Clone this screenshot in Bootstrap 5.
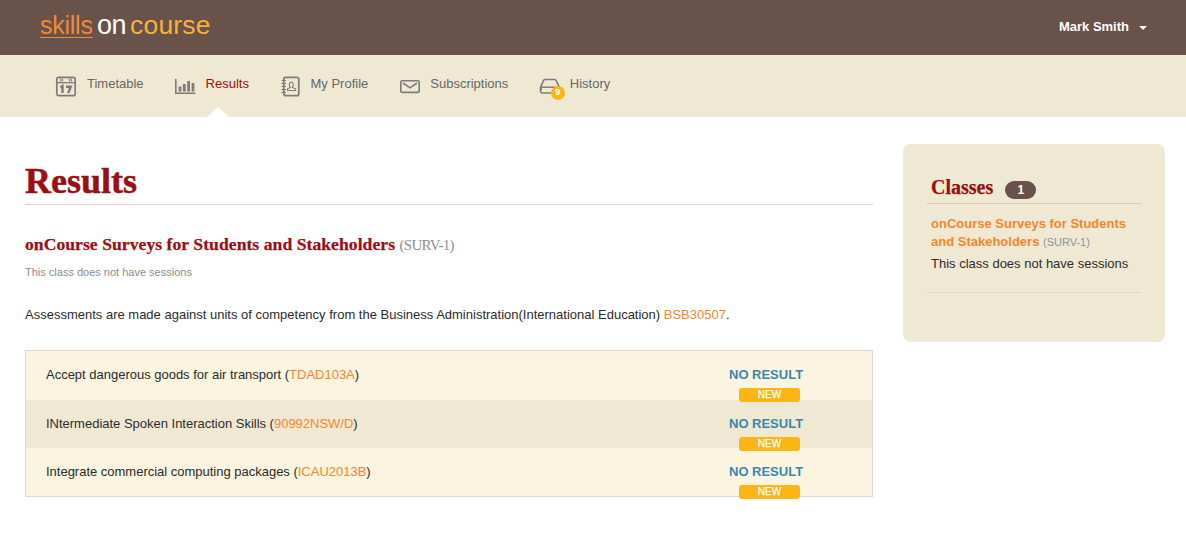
<!DOCTYPE html>
<html lang="en">
<head>
<meta charset="utf-8">
<meta name="viewport" content="width=device-width, initial-scale=1">
<title>Results - skillsOnCourse</title>
<link href="https://cdn.jsdelivr.net/npm/bootstrap@5.3.0/dist/css/bootstrap.min.css" rel="stylesheet">
<style>
body{font-family:"Liberation Sans",Arial,sans-serif;font-size:13px;line-height:18px;color:#2b2b2b;background:#fff}
a{text-decoration:none;color:#f5852a}
.topbar{height:55px;background:#68524a;padding:0 39px 0 40px}
.brand{font-size:27px;line-height:29px;color:#fff;padding-top:11px;gap:4px}
.brand span{display:block;white-space:nowrap}
.brand .b1{font-size:25px;line-height:29px;color:#f08a35;border-bottom:1px solid #f08a35;width:53px;height:27px;letter-spacing:-.25px}
.brand .b2{letter-spacing:-.6px;width:29px}
.brand .b3{font-size:26.5px;line-height:28px;color:#f9b233;letter-spacing:.2px}
.user{color:#fff;font-weight:700;height:54px;gap:10px}
.caret{border:4px solid transparent;border-top-color:#fff;border-bottom:0;margin-top:2px}
.mainnav{height:62px;background:#efe9d4;padding:0 25px}
.mainnav .nav-link{color:#666;padding:0;height:62px;position:relative;display:flex;align-items:flex-start}
.mainnav .nav-link.active{color:#990f12}
.mainnav .nav-link.active::after{content:"";position:absolute;left:34px;bottom:0;border:11px solid transparent;border-bottom:10px solid #fff;border-top:0}
.mainnav svg{margin-top:20px;width:24px;height:24px;flex:none}
.mainnav .txt{padding-top:20px;white-space:nowrap}
.count{position:absolute;left:13px;top:31px;width:14px;height:14px;border-radius:50%;background:#fdb515;color:#fff;font-size:9px;line-height:13px;text-align:center;font-weight:700}
.main-col{width:848px}
.serif{font-family:"Liberation Serif",serif;font-weight:700;color:#990f12;margin:0}
h1.serif{font-size:36px;line-height:40px;height:61px;padding-top:17px;border-bottom:1px solid #e6cfcc;-webkit-text-stroke:.5px #990f12}
h2.serif{font-size:17.6px;line-height:22px;height:22px;margin-top:28px;white-space:nowrap}
h2 .ttl{letter-spacing:.05px;-webkit-text-stroke:.25px #990f12}
h2 .code{font-weight:400;color:#8f8f8f;font-size:15px;letter-spacing:-.7px}
.note{font-size:11px;color:#8c8c8c;margin:8px 0 0;line-height:18px}
.units{border:1px solid #e3d3ca;margin-top:26px;height:147px;background:#faf4e0}
.unit{height:48.5px;padding:15px 69px 0 20px;letter-spacing:-.01px}
.unit:nth-child(even){background:#efe9d4}
.outcome{width:74px;color:#3a87ad;font-weight:700;white-space:nowrap}
.new-tag{display:block;width:61px;height:14px;margin:4px 0 0 10px;border-radius:3px;background:#fdb515;color:#fff;font-size:10px;line-height:13px;text-align:center;font-weight:400;position:relative;z-index:1;-webkit-text-stroke:.25px #fff}
.side{width:262px;height:198px;background:#efe9d4;border-radius:8px;padding:32px 24px 0;margin-top:27px}
.side h3{font-size:20px;line-height:23px;height:28px;border-bottom:1px solid #dfc3bd;padding-left:4px;gap:12px;-webkit-text-stroke:.25px #990f12}
.pill{font:700 12px/18px "Liberation Sans",sans-serif;background:#68524a;color:#fff;width:31px;height:18px;border-radius:9px;text-align:center;margin-top:5px;-webkit-text-stroke:0}
.class-item{padding:11px 4px 19px;border-bottom:1px solid #e0d6c8;white-space:nowrap}
.class-item .code{font-size:11px;color:#8b93a0}
</style>
</head>
<body class="min-vh-100">
<header class="topbar d-flex justify-content-between">
  <a href="#" class="brand d-flex align-items-start"><span class="b1">skills</span><span class="b2">on</span><span class="b3">course</span></a>
  <a href="#" class="user d-flex align-items-center"><span class="nm">Mark Smith</span><i class="caret"></i></a>
</header>
<nav class="mainnav">
  <ul class="nav flex-nowrap">
    <li style="margin-left:29px"><a class="nav-link" href="#"><svg viewBox="0 0 24 24" fill="none" stroke="#7c7d7b" stroke-width="1.7"><rect x="2.8" y="2.3" width="18.4" height="18.4" rx="2"/><path d="M3 7.700h18" stroke-width="1.300"/><circle cx="7.5" cy="5" r="1.300" stroke-width="1"/><circle cx="16.5" cy="5" r="1.300" stroke-width="1"/><path d="M6.300 12.300l2.200-1.200V18M12 11.800h4.800l-2.600 6.200" stroke-width="2.400"/></svg><span class="txt" style="margin-left:9px">Timetable</span></a></li>
    <li style="margin-left:29px"><a class="nav-link active" href="#"><svg viewBox="0 0 24 24" fill="none" stroke="#7c7d7b"><path d="M2.800 4v14.200H22.500" stroke-width="1.600"/><path d="M7 16.500v-5M11.300 16.500V9M15.600 16.500V6M20 16.500V8" stroke-width="2.800"/></svg><span class="txt" style="margin-left:9px">Results</span></a></li>
    <li style="margin-left:30px"><a class="nav-link" href="#"><svg viewBox="0 0 24 24" fill="none" stroke="#7c7d7b" stroke-width="1.700"><rect x="4.800" y="2.300" width="15" height="18.400" rx="2"/><path d="M2.500 5.500h4.500M2.500 8.500h4.500M2.500 11.500h4.500M2.500 14.500h4.500M2.500 17.500h4.500" stroke-width="1.100"/><path d="M8.500 15.500v-1.700l2.800-1.300c-1.500-2-1.200-5.500 1-5.500s2.500 3.500 1 5.500l3.200 1.300v1.700z" stroke-width="1.100"/></svg><span class="txt" style="margin-left:7.500px">My Profile</span></a></li>
    <li style="margin-left:29.500px"><a class="nav-link" href="#"><svg viewBox="0 0 24 24" fill="none" stroke="#7c7d7b" stroke-width="1.600"><rect x="2.800" y="5.800" width="18.400" height="11.600" rx="1.500"/><path d="M5 8l7 4.800L19 8"/></svg><span class="txt" style="margin-left:8.500px">Subscriptions</span></a></li>
    <li style="margin-left:29.500px"><a class="nav-link" href="#"><svg viewBox="0 0 24 24" fill="none" stroke="#7c7d7b" stroke-width="1.600"><path d="M7 4.500h9.500q1.200 0 1.700 1l3 6.500v4q0 2-2 2H4.500q-2 0-2-2v-3.500L5.500 5.500q.5-1 1.500-1z"/><path d="M3 15.500v-2q0-1.300 1.300-1.300H21"/></svg><span class="count">9</span><span class="txt" style="margin-left:8px">History</span></a></li>
  </ul>
</nav>
<div class="d-flex" style="padding-left:25px;gap:30px">
  <main class="main-col flex-shrink-0" style="padding-top:27px">
    <h1 class="serif">Results</h1>
    <h2 class="serif"><span class="ttl">onCourse Surveys for Students and Stakeholders</span> <span class="code">(SURV-1)</span></h2>
    <p class="note">This class does not have sessions</p>
    <p class="assess mb-0" style="margin-top:25px">Assessments are made against units of competency from the Business Administration(International Education) <a href="#">BSB30507</a>.</p>
    <div class="units">
      <div class="unit d-flex justify-content-between"><div>Accept dangerous goods for air transport (<a href="#">TDAD103A</a>)</div><div class="outcome">NO RESULT<span class="new-tag">NEW</span></div></div>
      <div class="unit d-flex justify-content-between"><div>INtermediate Spoken Interaction Skills (<a href="#">90992NSW/D</a>)</div><div class="outcome">NO RESULT<span class="new-tag">NEW</span></div></div>
      <div class="unit d-flex justify-content-between"><div>Integrate commercial computing packages (<a href="#">ICAU2013B</a>)</div><div class="outcome">NO RESULT<span class="new-tag">NEW</span></div></div>
    </div>
  </main>
  <aside class="side flex-shrink-0">
    <h3 class="serif d-flex">Classes <span class="pill">1</span></h3>
    <div class="class-item"><a href="#" class="fw-bold">onCourse Surveys for Students<br>and Stakeholders</a> <span class="code">(SURV-1)</span><div style="margin-top:4px">This class does not have sessions</div></div>
  </aside>
</div>
<script src="https://cdn.jsdelivr.net/npm/bootstrap@5.3.0/dist/js/bootstrap.bundle.min.js"></script>
</body>
</html>
